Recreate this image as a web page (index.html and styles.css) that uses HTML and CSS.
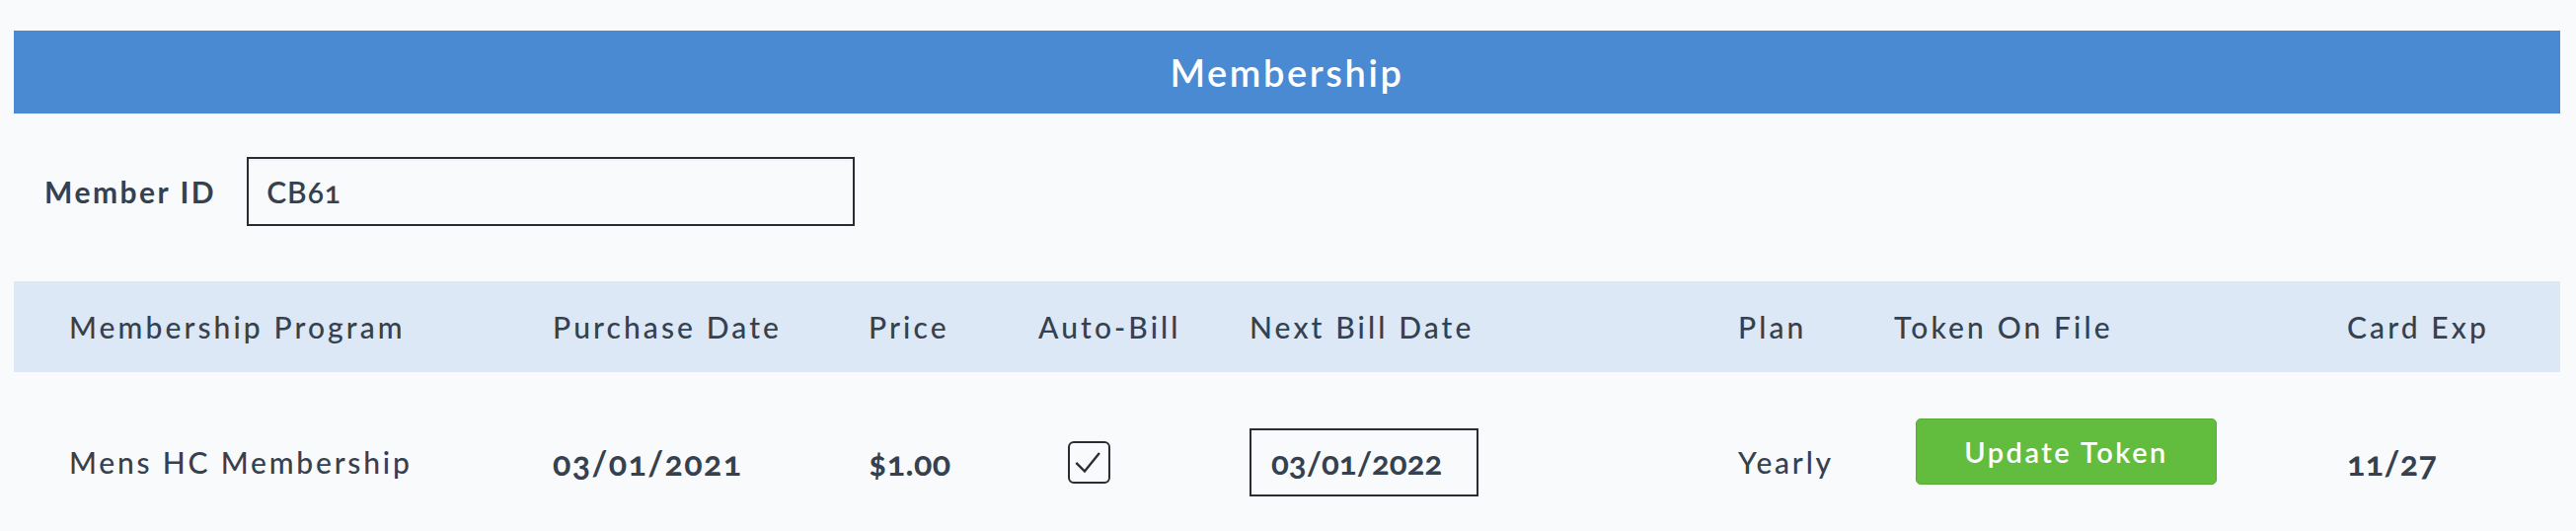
FILE: index.html
```html
<!DOCTYPE html>
<html lang="en">
<head>
  <meta charset="UTF-8" />
  <meta name="viewport" content="width=device-width, initial-scale=1.0" />
  <title>Membership</title>
  <link rel="stylesheet" href="styles.css">
</head>
<body>

<div class="page">
  <header class="banner">
    <h1>Membership</h1>
  </header>

  <div class="member-row">
    <label for="member-id">Member ID</label>
    <input id="member-id" type="text" value="CB61" />
  </div>

  <section class="memberships">
    <div class="row head-row">
      <div>Membership Program</div>
      <div>Purchase Date</div>
      <div>Price</div>
      <div>Auto-Bill</div>
      <div>Next Bill Date</div>
      <div>Plan</div>
      <div>Token On File</div>
      <div>Card Exp</div>
    </div>
    <div class="row data-row">
      <div>Mens HC Membership</div>
      <div class="num">03/01/2021</div>
      <div class="num price">$1.00</div>
      <div>
        <span class="check">
          <svg viewBox="0 0 43 43" width="39" height="39"><path d="M7 22 L16.5 31.5 L33 11" /></svg>
        </span>
      </div>
      <div><input class="date-input" type="text" value="03/01/2022" /></div>
      <div>Yearly</div>
      <div><button class="token-btn">Update Token</button></div>
      <div class="num exp">11/27</div>
    </div>
  </section>
</div>

</body>
</html>
```

FILE: styles.css
```css
body {
  margin: 0;
  background: #f9fafc;
  color: #36414f;
  font-family: Lato, 'Open Sans', sans-serif;
  font-variant-numeric: oldstyle-nums;
}
.page {
  padding: 31px 16px 0 14px;
}

/* Banner */
.banner {
  background: #4a8ad2;
  height: 84px;
  display: flex;
  align-items: center;
  justify-content: center;
}
.banner h1 {
  margin: 0;
  color: #fff;
  font-size: 38px;
  font-weight: 600;
  letter-spacing: 2.6px;
}

/* Member ID */
.member-row {
  margin-top: 44px;
  padding-left: 31px;
  display: flex;
  align-items: center;
  gap: 31px;
}
.member-row label {
  font-size: 30px;
  font-weight: 700;
  letter-spacing: 2.5px;
}
.member-row input {
  box-sizing: border-box;
  width: 616px;
  height: 70px;
  border: 2px solid #2a2b33;
  background: #f9fafc;
  box-shadow: inset 0 2px 2px rgba(0,0,0,0.04);
  padding: 0 0 0 18px;
  font-family: Lato, sans-serif;
  font-size: 30px;
  font-weight: 600;
  font-variant-numeric: oldstyle-nums;
  color: #36414f;
  letter-spacing: 1px;
}

/* Table */
.memberships {
  margin-top: 56px;
}
.row {
  display: grid;
  grid-template-columns: 490px 320px 172px 214px 495px 158px 459px 1fr;
  align-items: center;
  padding-left: 56px;
  font-size: 30px;
  font-weight: 500;
  letter-spacing: 3.1px;
}
.head-row {
  height: 92px;
  background: #dce8f5;
}
.data-row {
  height: 182px;
  letter-spacing: 2.8px;
}
.num {
  font-weight: 700;
  font-size: 34px;
  letter-spacing: 1.4px;
}
.price,
.exp {
  letter-spacing: 0.4px;
}
.check {
  box-sizing: border-box;
  display: flex;
  align-items: center;
  justify-content: center;
  width: 43px;
  height: 43px;
  margin-left: 30px;
  border: 2px solid #2a2b33;
  border-radius: 6px;
}
.check path {
  fill: none;
  stroke: #2a2b33;
  stroke-width: 2.6;
}
.date-input {
  box-sizing: border-box;
  width: 232px;
  height: 69px;
  border: 2px solid #2a2b33;
  background: #f9fafc;
  padding: 0 0 0 20px;
  font-family: Lato, sans-serif;
  font-size: 33px;
  font-weight: 700;
  font-variant-numeric: oldstyle-nums;
  color: #36414f;
  letter-spacing: 0;
}
.token-btn {
  box-sizing: border-box;
  width: 305px;
  height: 67px;
  margin: 0 0 21px 22px;
  background: #62bd3f;
  border: 1px solid #57ab37;
  border-radius: 5px;
  color: #fff;
  font-family: Lato, sans-serif;
  font-size: 29px;
  font-weight: 600;
  letter-spacing: 2.5px;
  cursor: pointer;
}
.token-btn:hover {
  background: #58ab38;
}
```
